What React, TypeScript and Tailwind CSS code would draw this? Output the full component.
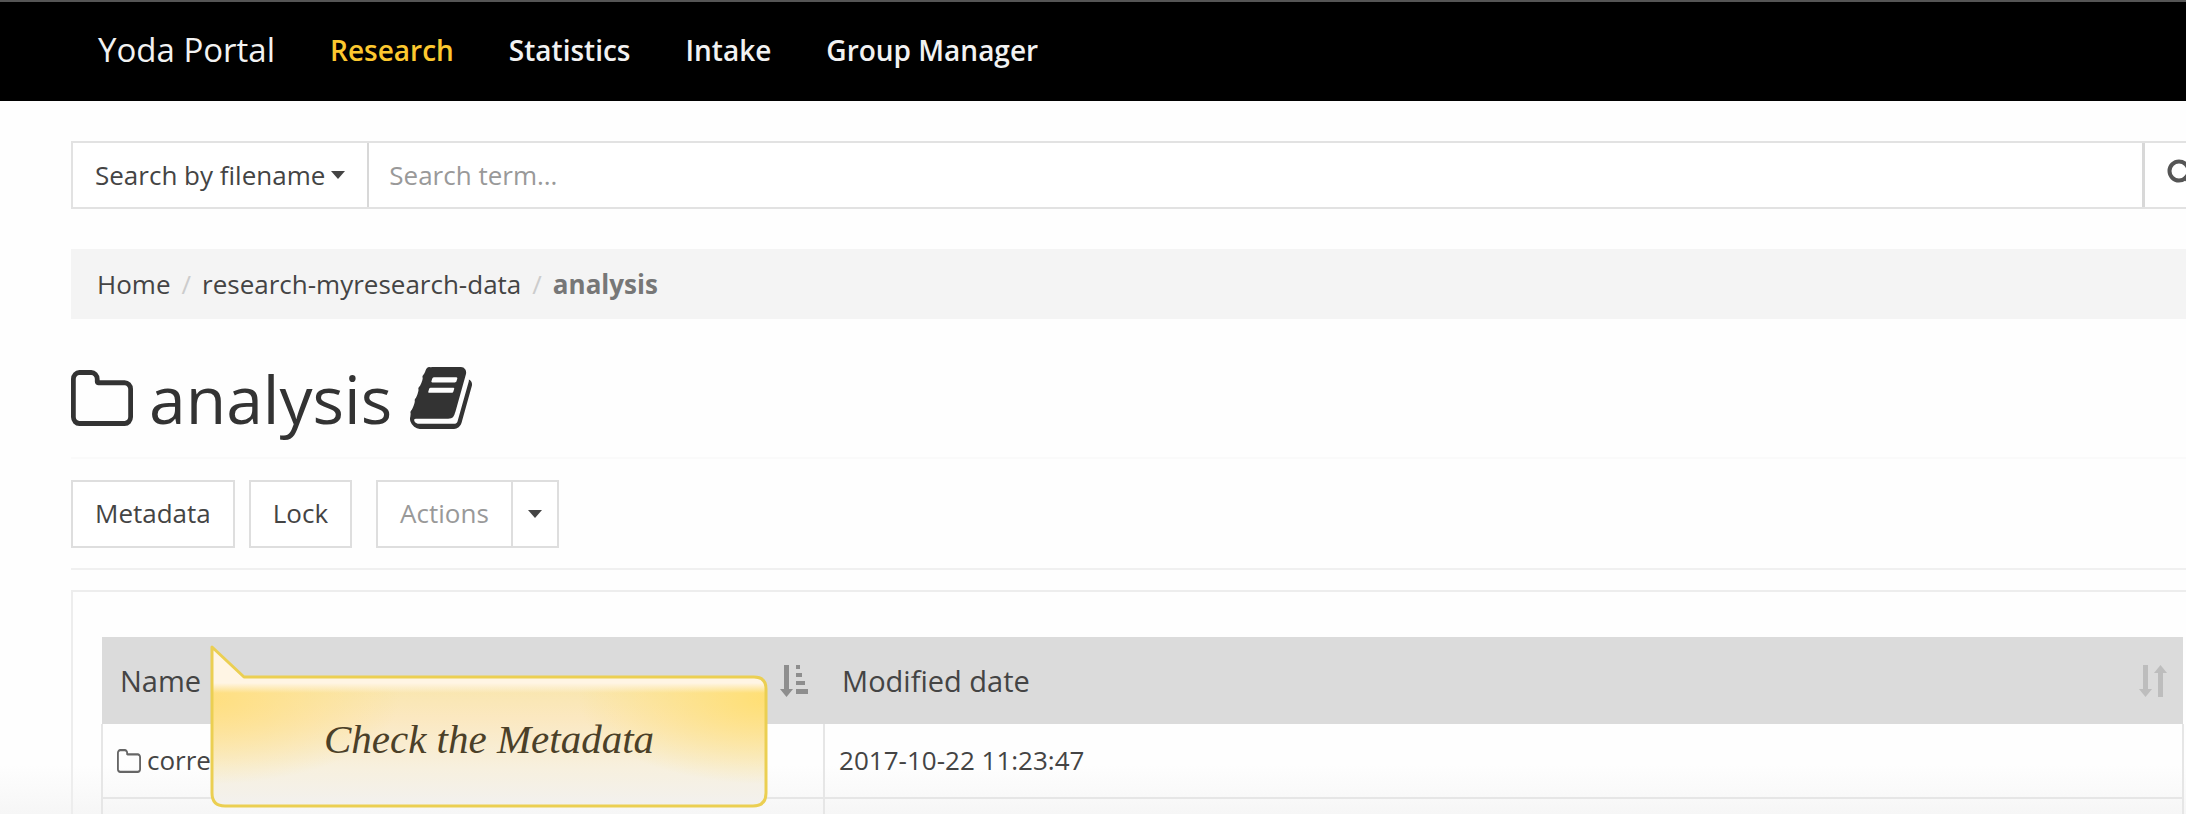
import type { ReactNode } from "react";

const navLinks = [
  { label: "Research", active: true },
  { label: "Statistics", active: false },
  { label: "Intake", active: false },
  { label: "Group Manager", active: false },
];

function FolderIcon({ className }: { className: string }) {
  return (
    <svg viewBox="64 128 1664 1408" preserveAspectRatio="none" fill="currentColor" className={className} aria-hidden="true">
      <path d="M1600 1312v-704q0-40-28-68t-68-28h-704q-40 0-68-28t-28-68v-64q0-40-28-68t-68-28h-320q-40 0-68 28t-28 68v960q0 40 28 68t68 28h1216q40 0 68-28t28-68zm128-704v704q0 92-66 158t-158 66h-1216q-92 0-158-66t-66-158v-960q0-92 66-158t158-66h320q92 0 158 66t66 158v32h672q92 0 158 66t66 158z" />
    </svg>
  );
}

function BookIcon({ className }: { className: string }) {
  return (
    <svg viewBox="64 128 1664 1536" preserveAspectRatio="none" fill="currentColor" className={className} aria-hidden="true">
      <path d="M1703 478q40 57 18 129l-275 906q-19 64-76.5 107.5t-122.5 43.5h-923q-77 0-148.5-53.5t-99.5-131.5q-24-67-2-127 0-4 3-27t4-37q1-8-3-21.5t-3-19.5q2-11 8-21t16.5-23.5 16.5-23.5q23-38 45-91.5t30-91.5q3-10 .5-30t-.5-28q3-11 17-28t17-23q21-36 42-92t25-90q1-9-2.5-32t.5-28q4-13 22-30.5t22-22.5q19-26 42.5-84.5t27.5-96.5q1-8-3-25.5t-2-26.5q2-8 9-18t18-23 17-21q8-12 16.5-30.5t15-35 16-36 19.5-32 26.5-23.5 36-11.5 47.5 5.5l-1 3q38-9 51-9h761q74 0 114 56t18 130l-274 906q-36 119-71.5 153.5t-128.5 34.5h-869q-27 0-38 15-11 16-1 43 24 70 144 70h923q29 0 56-15.5t35-41.5l300-987q7-22 5-57 38 15 59 43zm-1064 2q-4 13 2 22.5t20 9.5h608q13 0 25.5-9.5t16.5-22.5l21-64q4-13-2-22.5t-20-9.5h-608q-13 0-25.5 9.5t-16.5 22.5zm-83 256q-4 13 2 22.5t20 9.5h608q13 0 25.5-9.5t16.5-22.5l21-64q4-13-2-22.5t-20-9.5h-608q-13 0-25.5 9.5t-16.5 22.5z" />
    </svg>
  );
}

function SearchIcon() {
  return (
    <svg viewBox="0 0 32 32" fill="none" stroke="currentColor" className="h-8 w-8 shrink-0" aria-hidden="true">
      <circle cx="12" cy="12" r="9.500" strokeWidth="4" />
      <path d="M19 19l9 9" strokeWidth="5" strokeLinecap="round" />
    </svg>
  );
}

function Caret() {
  return (
    <svg viewBox="0 0 14 8" fill="currentColor" className="h-2 w-3.5 shrink-0" aria-hidden="true">
      <path d="M0 0h14L7 8z" />
    </svg>
  );
}

function SortedIcon() {
  return (
    <svg viewBox="0 0 28 34" fill="currentColor" className="h-[34px] w-7 shrink-0 text-[#8e8e8e]" aria-hidden="true">
      <path d="M4 1h5v24h4l-6.500 8L0 25h4z" />
      <path d="M16 1h4v4h-4zM16 9h6v4h-6zM16 17h9v4h-9zM16 25h12v5H16z" />
    </svg>
  );
}

function UnsortedIcon() {
  return (
    <svg viewBox="0 0 28 34" fill="currentColor" className="h-[34px] w-7 shrink-0 text-[#bdbdbd]" aria-hidden="true">
      <path d="M4 1h5v24h4l-6.500 8L0 25h4z" />
      <path d="M19 33h5V9h4l-6.500-8L15 9h4z" />
    </svg>
  );
}

function Th({ children, icon }: { children: ReactNode; icon: ReactNode }) {
  return (
    <th scope="col" className="h-[87px] pr-4 pl-[18px] text-left text-[29px] font-normal text-[#444]">
      <span className="flex items-center justify-between">
        {children}
        {icon}
      </span>
    </th>
  );
}

function Callout() {
  return (
    <div role="tooltip" className="absolute top-[51px] left-[137px] h-[166px] w-[558px]">
      <svg viewBox="0 0 558 166" className="absolute inset-0 h-full w-full" aria-hidden="true">
        <defs>
          <linearGradient id="fade" x1="0" y1="0" x2="0" y2="1">
            <stop offset="0.25" stopColor="#f9e6ad" />
            <stop offset="0.45" stopColor="#fbe8c0" />
            <stop offset="0.75" stopColor="#f7f0de" />
            <stop offset="1" stopColor="#f2f1f0" />
          </linearGradient>
          <radialGradient id="glowLeft" gradientUnits="userSpaceOnUse" cx="0" cy="0" r="1" gradientTransform="translate(0 56) scale(190 85)">
            <stop offset="0" stopColor="#ffdf80" />
            <stop offset="1" stopColor="#ffdf80" stopOpacity="0" />
          </radialGradient>
          <radialGradient id="glowRight" gradientUnits="userSpaceOnUse" cx="0" cy="0" r="1" gradientTransform="translate(558 56) scale(190 85)">
            <stop offset="0" stopColor="#ffdf74" />
            <stop offset="1" stopColor="#ffdf74" stopOpacity="0" />
          </radialGradient>
          <linearGradient id="shine" x1="0" y1="0" x2="0" y2="1">
            <stop offset="0.800" stopColor="#fff5e4" />
            <stop offset="1" stopColor="#fff5e4" stopOpacity="0" />
          </linearGradient>
          <clipPath id="bubble">
            <path d="M2 4L34 34H544Q556 34 556 46V150Q556 163 543 163H15Q2 163 2 150Z" />
          </clipPath>
        </defs>
        <g clipPath="url(#bubble)">
          <rect width="558" height="166" fill="url(#fade)" />
          <rect width="558" height="166" fill="url(#glowLeft)" />
          <rect width="558" height="166" fill="url(#glowRight)" />
          <rect width="558" height="50" fill="url(#shine)" />
        </g>
        <path
          d="M2 4L34 34H544Q556 34 556 46V150Q556 163 543 163H15Q2 163 2 150Z"
          fill="none"
          stroke="#ebcf52"
          strokeWidth="3"
          strokeLinejoin="round"
        />
      </svg>
      <p className="relative flex h-full items-center justify-center pt-7 font-['Liberation_Serif',serif] text-[41px] text-[#4b4028] italic">
        Check the Metadata
      </p>
    </div>
  );
}

export default function App() {
  return (
    <div className="min-h-screen overflow-hidden bg-linear-to-b from-[#fefefe] from-94% to-[#f6f6f6] font-['Open_Sans',sans-serif] text-[26px] text-[#444]">
      <header className="border-t-2 border-[#555] bg-black">
        <nav aria-label="Main" className="flex h-[99px] items-center gap-[55px] px-[98px] pb-1 text-[28px] font-semibold text-[#f2f2f2]">
          <a href="#home" className="text-[33px] font-normal">
            Yoda Portal
          </a>
          {navLinks.map((link) => (
            <a key={link.label} href="#nav" className={link.active ? "text-[#fdc82f]" : ""}>
              {link.label}
            </a>
          ))}
        </nav>
      </header>

      <main className="-mr-7 pt-10 pl-[71px]">
        <form className="flex h-[68px] border-2 border-[#e2e2e2] bg-white" onSubmit={(e) => e.preventDefault()}>
          <button type="button" className="flex items-center gap-1.5 border-r-2 border-[#d8d8d8] px-[22px]">
            Search by filename
            <Caret />
          </button>
          <input
            type="text"
            aria-label="Search term"
            placeholder="Search term..."
            className="min-w-0 flex-1 px-5 outline-none placeholder:text-[#999]"
          />
          <button type="submit" aria-label="Search" className="flex w-[70px] items-center border-l-3 border-[#d8d8d8] pl-[22px] text-[#555]">
            <SearchIcon />
          </button>
        </form>

        <nav aria-label="Breadcrumb" className="mt-10 flex h-[70px] items-center bg-[#f4f4f4] px-[26px]">
          <ol className="flex gap-[11px]">
            <li>
              <a href="#home">Home</a>
            </li>
            <li aria-hidden="true" className="text-[#ccc]">/</li>
            <li>
              <a href="#data">research-myresearch-data</a>
            </li>
            <li aria-hidden="true" className="text-[#ccc]">/</li>
            <li aria-current="page" className="font-bold text-[#777]">analysis</li>
          </ol>
        </nav>

        <div className="flex h-[140px] items-center border-b-2 border-[#fafafa] pt-5 text-[#333]">
          <FolderIcon className="h-14 w-[62px]" />
          <h1 className="ml-4 text-[66px] leading-none">analysis</h1>
          <BookIcon className="ml-[18px] h-[62px] w-[62px]" />
        </div>

        <div className="flex h-[111px] items-center border-b-2 border-[#f0f0f0]">
          <button type="button" className="h-[68px] border-2 border-[#dedede] bg-white px-[22px]">Metadata</button>
          <button type="button" className="ml-3.5 h-[68px] border-2 border-[#dedede] bg-white px-[22px]">Lock</button>
          <div className="ml-6 flex h-[68px] border-2 border-[#dedede] bg-white">
            <button type="button" disabled className="px-[22px] text-[#999]">Actions</button>
            <button type="button" aria-label="More actions" className="flex w-[46px] items-center justify-center border-l-2 border-[#dedede]">
              <Caret />
            </button>
          </div>
        </div>

        <section className="relative mt-5 border-x-2 border-t-2 border-[#ededed] px-7 pt-[45px]">
          <table className="w-full table-fixed border-collapse">
            <colgroup>
              <col className="w-[34.7%]" />
              <col />
            </colgroup>
            <thead>
              <tr className="bg-[#dbdbdb]">
                <Th icon={<SortedIcon />}>Name</Th>
                <Th icon={<UnsortedIcon />}>Modified date</Th>
              </tr>
            </thead>
            <tbody>
              <tr className="h-[74px]">
                <td className="border-2 border-t-0 border-[#e6e6e6] px-3.5">
                  <span className="flex items-center gap-1.5">
                    <FolderIcon className="h-6 w-6 text-[#666]" />
                    corre
                  </span>
                </td>
                <td className="border-2 border-t-0 border-[#e6e6e6] px-3.5">2017-10-22 11:23:47</td>
              </tr>
              <tr className="h-4">
                <td className="border-x-2 border-[#e6e6e6]" />
                <td className="border-x-2 border-[#e6e6e6]" />
              </tr>
            </tbody>
          </table>
          <Callout />
        </section>
      </main>
    </div>
  );
}
